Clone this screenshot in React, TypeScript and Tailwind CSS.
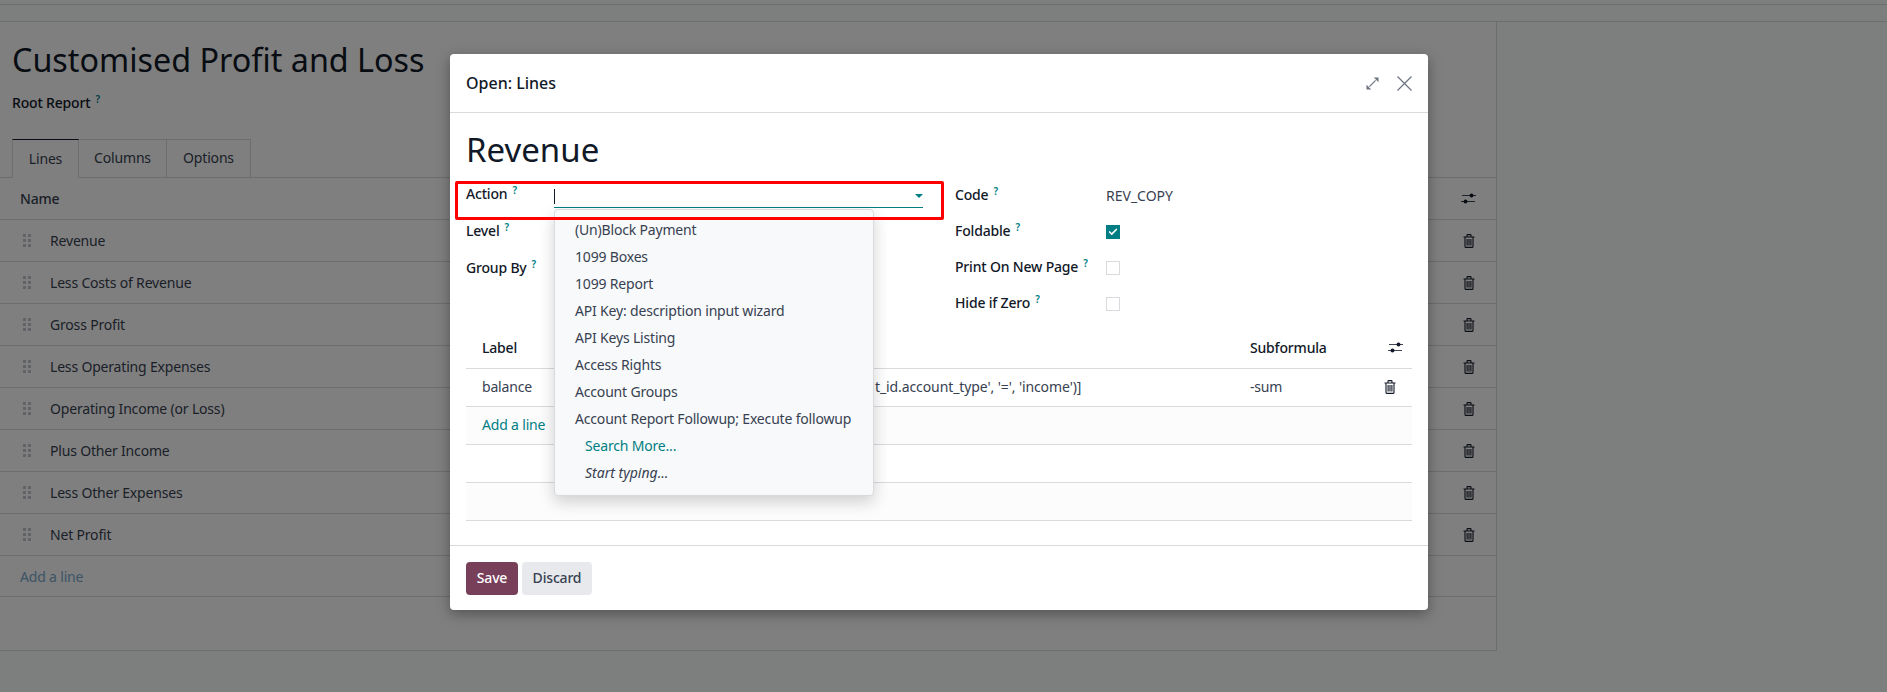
import { Check } from 'lucide-react';

const fontStack = 'font-["Noto_Sans","Open_Sans",sans-serif]';

const reportLines = [
  'Revenue',
  'Less Costs of Revenue',
  'Gross Profit',
  'Less Operating Expenses',
  'Operating Income (or Loss)',
  'Plus Other Income',
  'Less Other Expenses',
  'Net Profit',
];

const actionOptions = [
  '(Un)Block Payment',
  '1099 Boxes',
  '1099 Report',
  'API Key: description input wizard',
  'API Keys Listing',
  'Access Rights',
  'Account Groups',
  'Account Report Followup; Execute followup',
];

const Help = () => (
  <sup className="ml-[5px] text-[10px] font-semibold text-[#017e84]">?</sup>
);

const TrashIcon = () => (
  <svg width="12" height="14" viewBox="0 0 12 14" fill="none" stroke="currentColor" strokeWidth="1.1">
    <path d="M0.5 3h11M2 3v9.4c0 .5.4 1 1 1h6c.6 0 1-.5 1-1V3M4 3V1.2c0-.3.2-.6.6-.6h2.8c.4 0 .6.3.6.6V3" />
    <path d="M4.1 5v6.5M6 5v6.5M7.9 5v6.5" />
  </svg>
);

const SlidersIcon = () => (
  <svg width="15" height="13" viewBox="0 0 15 13" fill="currentColor">
    <rect x="1" y="3" width="14" height="0.8" />
    <rect x="0" y="9.2" width="14" height="0.8" />
    <circle cx="10.5" cy="3.4" r="2" />
    <circle cx="4.5" cy="9.6" r="2" />
  </svg>
);

const ExpandIcon = () => (
  <svg width="13" height="13" viewBox="0 0 13 13" fill="currentColor">
    <path d="M7.8 0.5H12.5V5.2Z" />
    <path d="M0.5 7.8V12.5H5.2Z" />
    <path d="M3.4 9.6L9.6 3.4" stroke="currentColor" strokeWidth="1.2" />
  </svg>
);

const CloseIcon = () => (
  <svg width="15" height="15" viewBox="0 0 15 15" fill="none" stroke="currentColor" strokeWidth="1.2">
    <path d="M0.5 0.5L14.5 14.5M14.5 0.5L0.5 14.5" />
  </svg>
);

const DragHandle = () => (
  <div className="grid w-[8px] grid-cols-2 gap-x-[2px] gap-y-[2px]">
    {[0, 1, 2, 3, 4, 5].map((i) => (
      <span key={i} className="h-[3px] w-[3px] bg-[#c4c7cc]" />
    ))}
  </div>
);

const Checkbox = ({ checked }: { checked?: boolean }) =>
  checked ? (
    <span className="flex h-[14px] w-[14px] items-center justify-center bg-[#017e84] text-white">
      <Check size={10} strokeWidth={4} />
    </span>
  ) : (
    <span className="h-[14px] w-[14px] border border-[#d8dadd] bg-white" />
  );

const FieldLabel = ({ children }: { children: string }) => (
  <div className="font-medium text-[#111827]">
    {children}
    <Help />
  </div>
);

export default function App() {
  return (
    <div className={`relative h-[692px] w-full overflow-hidden bg-[#fafefc] text-[14px] tracking-[-0.18px] text-[#374151] ${fontStack}`}>
      <div className="h-[5px] border-b border-[#d8dadd]" />
      <div className="h-[17px] border-b border-[#d8dadd]" />

      {/* Report form behind the dialog */}
      <div className="h-[629px] w-[1497px] border-r border-b border-[#d8dadd] bg-white">
        <h1 className="pt-[14px] pl-[12px] text-[32.3px] leading-[46px] tracking-normal text-[#111827]">
          Customised Profit and Loss
        </h1>
        <div className="mt-[10px] pl-[12px] font-medium text-[#111827]">
          Root Report
          <Help />
        </div>
        <div className="mt-[26px] flex h-[39px] border-b border-[#d8dadd] pl-[12px]">
          <div className="-mb-px flex w-[67px] items-center justify-center border-x border-t border-[#d8dadd] border-t-[#111827] bg-white pb-[2px]">
            Lines
          </div>
          <div className="flex w-[88px] items-center justify-center border-t border-r border-[#d8dadd] pb-[2px]">Columns</div>
          <div className="flex w-[84px] items-center justify-center border-t border-r border-[#d8dadd] pb-[2px]">Options</div>
        </div>
        <div className="flex h-[42px] items-center justify-between border-b border-[#d8dadd] pr-[20px] pl-[20px] font-medium">
          Name
          <span className="text-[#111827]">
            <SlidersIcon />
          </span>
        </div>
        {reportLines.map((line) => (
          <div key={line} className="flex h-[42px] items-center border-b border-[#d8dadd] pr-[21px] pl-[23px]">
            <DragHandle />
            <span className="ml-[19px] flex-1">{line}</span>
            <span className="text-[#111827]">
              <TrashIcon />
            </span>
          </div>
        ))}
        <div className="flex h-[41px] items-center border-b border-[#d8dadd] pl-[20px] text-[#7aa8cc]">Add a line</div>
      </div>

      <div className="absolute inset-0 bg-black/50" />

      {/* Dialog */}
      <div className="absolute top-[54px] left-[450px] flex h-[556px] w-[978px] flex-col rounded-[4px] bg-white shadow-[0_4px_14px_rgba(0,0,0,0.35)]">
        <div className="flex h-[59px] items-center justify-between border-b border-[#d8dadd] pr-[16px] pl-[16px]">
          <div className="text-[16px] font-medium tracking-normal text-[#111827]">Open: Lines</div>
          <div className="flex items-center gap-[18px] text-[#6b7280]">
            <ExpandIcon />
            <CloseIcon />
          </div>
        </div>

        <div className="flex-1 px-[16px]">
          <h2 className="pt-[14px] text-[33px] leading-[46px] tracking-normal text-[#111827]">Revenue</h2>
          <div className="mt-[8px] flex">
            <div className="w-[489px]">
              <div className="flex h-[37px]">
                <div className="w-[88px] pt-[2px]">
                  <FieldLabel>Action</FieldLabel>
                </div>
                <div className="relative h-[27px] w-[369px] border-b border-[#017e84]">
                  <span className="absolute top-[8px] left-0 h-[15px] w-px bg-[#111827]" />
                  <span className="absolute top-[13px] right-0 h-0 w-0 border-x-[4px] border-t-[4px] border-x-transparent border-t-[#017e84]" />
                </div>
              </div>
              <div className="flex h-[37px] pt-[2px]">
                <FieldLabel>Level</FieldLabel>
              </div>
              <div className="flex h-[37px] pt-[2px]">
                <FieldLabel>Group By</FieldLabel>
              </div>
            </div>
            <div>
              {[
                ['Code', 'text'],
                ['Foldable', 'on'],
                ['Print On New Page', 'off'],
                ['Hide if Zero', 'off'],
              ].map(([label, kind]) => (
                <div key={label} className="flex h-[36px] items-start pt-[3px]">
                  <div className="w-[151px]">
                    <FieldLabel>{label}</FieldLabel>
                  </div>
                  {kind === 'text' ? (
                    <span className="pt-[1px] tracking-normal">REV_COPY</span>
                  ) : (
                    <span className="mt-[5px] flex">
                      <Checkbox checked={kind === 'on'} />
                    </span>
                  )}
                </div>
              ))}
            </div>
          </div>

          {/* Expressions table */}
          <div className="mt-[4px]">
            <div className="grid h-[40px] grid-cols-[409px_359px_136px_42px] items-center border-b border-[#d8dadd] pb-[2px] font-medium text-[#111827]">
              <span className="pl-[16px]">Label</span>
              <span />
              <span className="pl-[16px]">Subformula</span>
              <span className="flex justify-end pr-[9px]">
                <SlidersIcon />
              </span>
            </div>
            <div className="grid h-[38px] grid-cols-[409px_359px_136px_42px] items-center border-b border-[#d8dadd] pb-[2px]">
              <span className="pl-[16px]">balance</span>
              <span className="tracking-[-0.1px]">t_id.account_type', '=', 'income')]</span>
              <span className="pl-[16px]">-sum</span>
              <span className="flex justify-end pr-[16px] text-[#111827]">
                <TrashIcon />
              </span>
            </div>
            <div className="flex h-[38px] items-center border-b border-[#d8dadd] bg-[#fcfcfc] pb-[2px] pl-[16px] text-[#017e84]">
              Add a line
            </div>
            <div className="h-[38px] border-b border-[#d8dadd]" />
            <div className="h-[38px] border-b border-[#d8dadd] bg-[#fcfcfc]" />
          </div>
        </div>

        <div className="flex h-[65px] items-start gap-[4px] border-t border-[#d8dadd] pt-[16px] pl-[16px]">
          <button className="h-[33px] w-[52px] rounded-[4px] bg-[#783f5a] pb-[2px] font-medium text-white">Save</button>
          <button className="h-[33px] w-[70px] rounded-[4px] bg-[#e7e9ed] pb-[2px] font-medium text-[#374151]">Discard</button>
        </div>

        {/* Autocomplete menu */}
        <div className="absolute top-[155px] left-[104px] w-[320px] rounded-[4px] border border-[#d8dadd] bg-[#f8f9fa] pt-[6px] pb-[9px] shadow-[0_6px_16px_rgba(0,0,0,0.18)]">
          {actionOptions.map((option) => (
            <div key={option} className="flex h-[27px] items-center pl-[20px]">
              {option}
            </div>
          ))}
          <div className="flex h-[27px] items-center pl-[30px] text-[#017e84]">Search More...</div>
          <div className="flex h-[27px] items-center pl-[30px] tracking-normal italic">Start typing...</div>
        </div>

        {/* Red highlight drawn on the screenshot */}
        <div className="pointer-events-none absolute top-[127px] left-[5px] h-[39px] w-[489px] rounded-[2px] border-[3px] border-[#ff0000]" />
      </div>
    </div>
  );
}
